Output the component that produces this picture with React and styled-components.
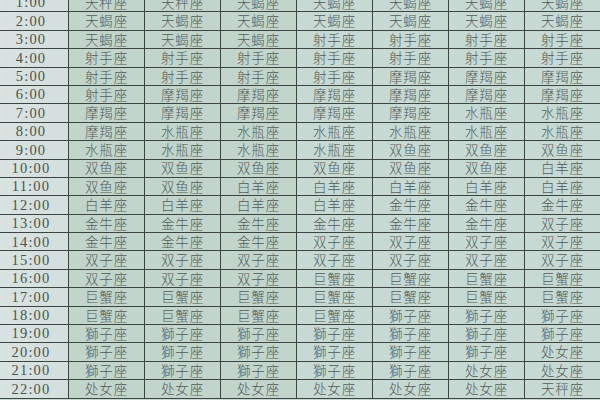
import React from "react";
import styled, { createGlobalStyle } from "styled-components";

const GlobalStyle = createGlobalStyle`
  html, body {
    margin: 0;
    padding: 0;
    width: 600px;
    height: 400px;
    overflow: hidden;
    background: #c7d8d1;
  }
`;

const Table = styled.div`
  display: grid;
  grid-template-columns: 68px repeat(7, 75px);
  grid-auto-rows: 17.4px;
  gap: 1px;
  width: 600px;
  margin-top: -6px;
  background: #3d4543;
  border-bottom: 1px solid #3d4543;
`;

const TimeCell = styled.div`
  display: flex;
  align-items: center;
  justify-content: center;
  padding-right: 6px;
  background: linear-gradient(90deg, #d9e3e1, #d3dfdc);
  color: #4d5351;
  font-family: "Liberation Serif", serif;
  font-size: 14.5px;
  letter-spacing: 1.2px;
  line-height: 1;
`;

const SignCell = styled.div`
  display: flex;
  align-items: center;
  justify-content: center;
  background: ${(p) => (p.$col < 3 ? "#c2d5cb" : "#c7d9d3")};
  color: #535c59;
  font-family: "Noto Sans CJK SC", "Noto Sans CJK TC", sans-serif;
  font-size: 13.5px;
  font-weight: 300;
  line-height: 1;
  letter-spacing: 0.8px;
`;

const rows = [
  ["1:00", "天秤座 天秤座 天蝎座 天蝎座 天蝎座 天蝎座 天蝎座"],
  ["2:00", "天蝎座 天蝎座 天蝎座 天蝎座 天蝎座 天蝎座 天蝎座"],
  ["3:00", "天蝎座 天蝎座 天蝎座 射手座 射手座 射手座 射手座"],
  ["4:00", "射手座 射手座 射手座 射手座 射手座 射手座 射手座"],
  ["5:00", "射手座 射手座 射手座 射手座 摩羯座 摩羯座 摩羯座"],
  ["6:00", "射手座 摩羯座 摩羯座 摩羯座 摩羯座 摩羯座 摩羯座"],
  ["7:00", "摩羯座 摩羯座 摩羯座 摩羯座 摩羯座 水瓶座 水瓶座"],
  ["8:00", "摩羯座 水瓶座 水瓶座 水瓶座 水瓶座 水瓶座 水瓶座"],
  ["9:00", "水瓶座 水瓶座 水瓶座 水瓶座 双鱼座 双鱼座 双鱼座"],
  ["10:00", "双鱼座 双鱼座 双鱼座 双鱼座 双鱼座 双鱼座 白羊座"],
  ["11:00", "双鱼座 双鱼座 白羊座 白羊座 白羊座 白羊座 白羊座"],
  ["12:00", "白羊座 白羊座 白羊座 白羊座 金牛座 金牛座 金牛座"],
  ["13:00", "金牛座 金牛座 金牛座 金牛座 金牛座 金牛座 双子座"],
  ["14:00", "金牛座 金牛座 金牛座 双子座 双子座 双子座 双子座"],
  ["15:00", "双子座 双子座 双子座 双子座 双子座 双子座 双子座"],
  ["16:00", "双子座 双子座 双子座 巨蟹座 巨蟹座 巨蟹座 巨蟹座"],
  ["17:00", "巨蟹座 巨蟹座 巨蟹座 巨蟹座 巨蟹座 巨蟹座 巨蟹座"],
  ["18:00", "巨蟹座 巨蟹座 巨蟹座 巨蟹座 獅子座 獅子座 獅子座"],
  ["19:00", "獅子座 獅子座 獅子座 獅子座 獅子座 獅子座 獅子座"],
  ["20:00", "獅子座 獅子座 獅子座 獅子座 獅子座 獅子座 处女座"],
  ["21:00", "獅子座 獅子座 獅子座 獅子座 獅子座 处女座 处女座"],
  ["22:00", "处女座 处女座 处女座 处女座 处女座 处女座 天秤座"],
];

const App = () => {
  return (
    <>
      <GlobalStyle />
      <Table>
        {rows.map(([time, signs]) => (
          <React.Fragment key={time}>
            <TimeCell>{time}</TimeCell>
            {signs.split(" ").map((sign, i) => (
              <SignCell key={i} $col={i}>
                {sign}
              </SignCell>
            ))}
          </React.Fragment>
        ))}
      </Table>
    </>
  );
};

export default App;
